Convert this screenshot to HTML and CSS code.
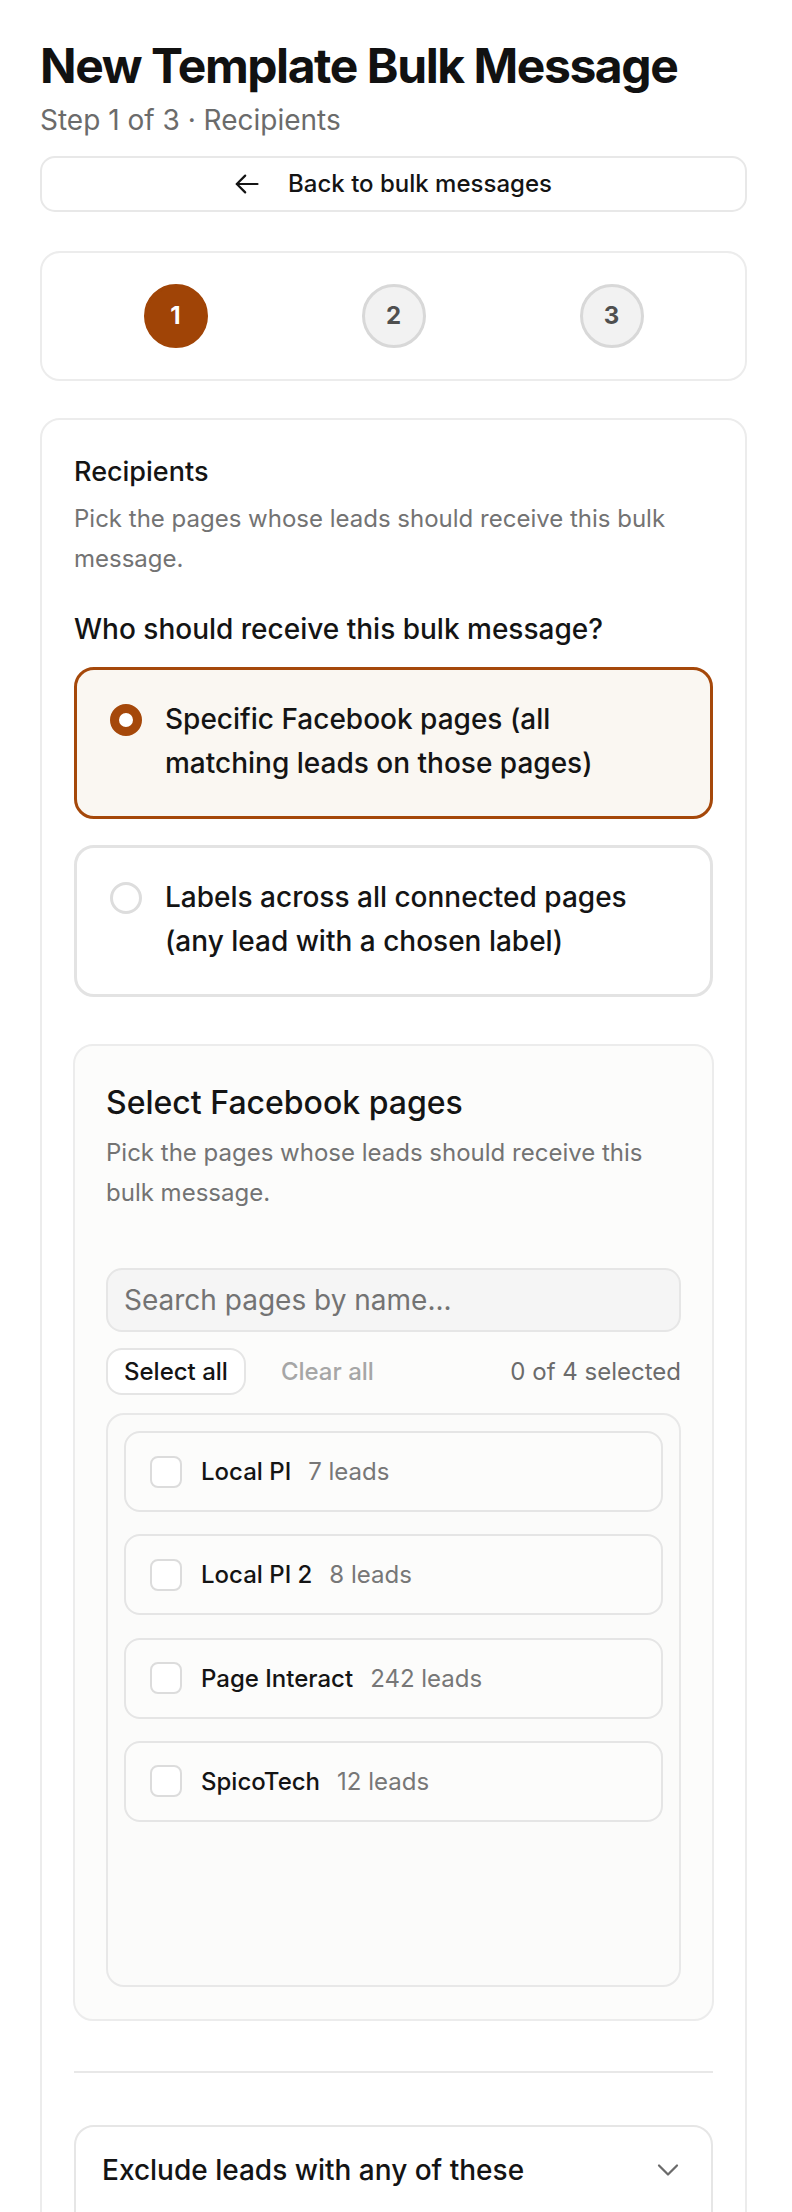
FILE: index.html
```html
<!DOCTYPE html>
<html lang="en">
<head>
<meta charset="utf-8">
<title>New Template Bulk Message</title>
<link rel="stylesheet" href="styles.css">
</head>
<body>
<div class="page">
  <h1 class="title">New Template Bulk Message</h1>
  <p class="subtitle">Step 1 of 3 · Recipients</p>
  <button class="back-btn" type="button">
    <svg class="back-icon" width="24" height="20" viewBox="0 0 24 20" fill="none" stroke="currentColor" stroke-width="2.2" stroke-linecap="round" stroke-linejoin="round"><path d="M22.5 10H1.8"/><path d="M10.2 1.6 1.8 10l8.4 8.4"/></svg>
    <span>Back to bulk messages</span>
  </button>

  <div class="stepper">
    <div class="step active">1</div>
    <div class="step">2</div>
    <div class="step">3</div>
  </div>

  <div class="card">
    <h2 class="section-title">Recipients</h2>
    <p class="desc">Pick the pages whose leads should receive this bulk message.</p>
    <h3 class="question">Who should receive this bulk message?</h3>
    <div class="options">
      <div class="option selected">
        <span class="radio"></span>
        <span class="option-text">Specific Facebook pages (all matching leads on those pages)</span>
      </div>
      <div class="option">
        <span class="radio"></span>
        <span class="option-text">Labels across all connected pages (any lead with a chosen label)</span>
      </div>
    </div>

    <div class="pages-card">
      <h3 class="pages-title">Select Facebook pages</h3>
      <p class="desc">Pick the pages whose leads should receive this bulk message.</p>
      <input class="search" type="text" placeholder="Search pages by name...">
      <div class="toolbar">
        <button class="select-all" type="button">Select all</button>
        <button class="clear-all" type="button">Clear all</button>
        <span class="selected-count">0 of 4 selected</span>
      </div>
      <div class="list">
        <div class="row"><span class="checkbox"></span><span class="row-name">Local PI</span><span class="row-count">7 leads</span></div>
        <div class="row"><span class="checkbox"></span><span class="row-name">Local PI 2</span><span class="row-count">8 leads</span></div>
        <div class="row"><span class="checkbox"></span><span class="row-name">Page Interact</span><span class="row-count">242 leads</span></div>
        <div class="row"><span class="checkbox"></span><span class="row-name">SpicoTech</span><span class="row-count">12 leads</span></div>
      </div>
    </div>

    <hr class="sep">

    <div class="exclude">
      <span class="exclude-title">Exclude leads with any of these</span>
      <svg class="chevron" width="36" height="36" viewBox="0 0 24 24" fill="none" stroke="currentColor" stroke-width="1.5" stroke-linecap="round" stroke-linejoin="round"><path d="m6 9 6 6 6-6"/></svg>
    </div>
  </div>
</div>
</body>
</html>
```

FILE: styles.css
```css
* { box-sizing: border-box; }

body {
  margin: 0;
  background: #ffffff;
  font-family: Inter, "Noto Sans", "Liberation Sans", sans-serif;
  color: #141414;
}

.page {
  margin-left: 40px;
  width: 707px;
  padding-top: 37px;
}

.title {
  margin: 0;
  font-size: 48px;
  line-height: 57.6px;
  font-weight: 700;
  letter-spacing: -0.03em;
  color: #111111;
}

.subtitle {
  margin: 5px 0 0;
  font-size: 28px;
  line-height: 40.5px;
  color: #6b6b6b;
}

.back-btn {
  margin-top: 15.5px;
  width: 100%;
  height: 56px;
  display: flex;
  align-items: center;
  justify-content: center;
  gap: 29px;
  border: 2px solid #e8e8e8;
  border-radius: 15px;
  background: #ffffff;
  font-family: inherit;
  font-size: 24px;
  font-weight: 500;
  color: #141414;
  padding: 0;
}

.back-icon { flex: none; }

.stepper {
  margin-top: 39px;
  height: 130px;
  border: 2px solid #ececec;
  border-radius: 20px;
  display: grid;
  grid-template-columns: repeat(3, 1fr);
  align-items: center;
  justify-items: center;
  padding: 0 24.5px;
}

.step {
  width: 64px;
  height: 64px;
  border-radius: 50%;
  display: flex;
  align-items: center;
  justify-content: center;
  font-size: 24px;
  font-weight: 700;
  background: #f2f2f2;
  border: 3px solid #d8d8d8;
  color: #4f4f4f;
}

.step.active {
  background: #a04406;
  border-color: #a04406;
  color: #ffffff;
}

.card {
  margin-top: 37px;
  border: 2px solid #ececec;
  border-radius: 20px;
  padding: 32px 32px 40px;
}

.section-title {
  margin: 0;
  font-size: 27px;
  line-height: 40.5px;
  font-weight: 500;
}

.desc {
  margin: 7px 0 0;
  font-size: 24px;
  line-height: 40px;
  color: #737373;
}

.question {
  margin: 30px 0 0;
  font-size: 28px;
  line-height: 40.5px;
  font-weight: 500;
}

.options {
  margin-top: 17.5px;
  display: flex;
  flex-direction: column;
  gap: 26px;
}

.option {
  height: 152px;
  display: flex;
  align-items: flex-start;
  gap: 23px;
  padding: 28px 33px;
  border: 3px solid #e3e3e3;
  border-radius: 20px;
  background: #ffffff;
}

.option.selected {
  border-color: #a5480a;
  background: #faf7f2;
}

.radio {
  flex: none;
  width: 32px;
  height: 32px;
  margin-top: 6px;
  border-radius: 50%;
  border: 3px solid #dddddd;
  background: #ffffff;
}

.option.selected .radio {
  border: 9.5px solid #a5480a;
}

.option-text {
  max-width: 495px;
  font-size: 28px;
  line-height: 43.5px;
  font-weight: 500;
  color: #141414;
}

.pages-card {
  margin: 47px -1px 0;
  border: 2px solid #ececec;
  border-radius: 20px;
  background: #fcfcfb;
  padding: 34px 31px 32px;
}

.pages-title {
  margin: 0;
  font-size: 32px;
  line-height: 45px;
  font-weight: 500;
}

.pages-card .desc {
  margin-top: 8px;
}

.search {
  display: block;
  margin-top: 55px;
  width: 100%;
  height: 64px;
  border: 2px solid #e6e6e6;
  border-radius: 16px;
  background: #f5f5f5;
  padding: 0 16px;
  font-family: inherit;
  font-size: 28px;
  color: #141414;
  outline: none;
}

.search::placeholder { color: #737373; }

.toolbar {
  margin-top: 16px;
  display: flex;
  align-items: center;
  gap: 15px;
}

.select-all,
.clear-all {
  height: 47px;
  padding: 0 16px;
  border-radius: 16px;
  font-family: inherit;
  font-size: 24px;
  font-weight: 500;
}

.select-all {
  border: 2px solid #e5e5e5;
  background: #ffffff;
  color: #141414;
}

.clear-all {
  border: 2px solid transparent;
  background: transparent;
  color: #a6a6a6;
  padding: 0 18px;
}

.selected-count {
  margin-left: auto;
  font-size: 24px;
  color: #6b6b6b;
}

.list {
  margin-top: 18px;
  height: 574px;
  border: 2px solid #e8e8e8;
  border-radius: 18px;
  background: #fbfbfa;
  padding: 16px;
  display: flex;
  flex-direction: column;
  gap: 22.3px;
}

.row {
  flex: none;
  height: 81px;
  display: flex;
  align-items: center;
  padding: 0 24px;
  border: 2px solid #e5e5e5;
  border-radius: 16px;
  background: #fcfcfb;
}

.checkbox {
  flex: none;
  width: 32px;
  height: 32px;
  border: 2.5px solid #dcdcdc;
  border-radius: 8px;
  background: #ffffff;
  margin-right: 19px;
}

.row-name {
  font-size: 24px;
  font-weight: 500;
  color: #141414;
}

.row-count {
  margin-left: 17px;
  font-size: 24px;
  color: #777777;
}

.sep {
  margin: 50px 0 52px;
  height: 2px;
  border: 0;
  background: #e8e8e8;
}

.exclude {
  min-height: 140px;
  display: flex;
  justify-content: space-between;
  align-items: flex-start;
  padding: 23px 25px 0 26px;
  border: 2px solid #e6e6e6;
  border-radius: 20px;
  background: #ffffff;
}

.exclude-title {
  font-size: 28px;
  line-height: 40.5px;
  font-weight: 500;
}

.chevron {
  flex: none;
  margin-top: 2px;
  color: #6b6b6b;
}
```
